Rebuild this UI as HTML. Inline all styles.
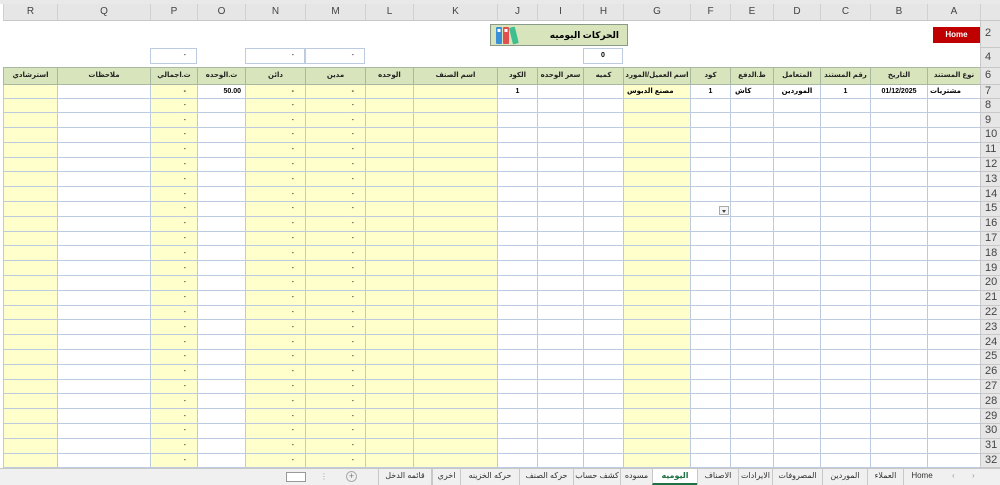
<!DOCTYPE html>
<html><head><meta charset="utf-8"><style>
*{box-sizing:border-box;margin:0;padding:0}
body{width:1000px;height:485px;overflow:hidden;background:#fff;font-family:"Liberation Sans","DejaVu Sans",sans-serif;position:relative}
.top{position:absolute;left:0;top:0;width:1000px;height:4px;background:#e9e9e9}
table{position:absolute;left:3px;top:4px;border-collapse:collapse;table-layout:fixed;direction:rtl;width:997px}
td,th{padding:0;overflow:hidden;white-space:nowrap;font-size:7px;line-height:1}
thead th{height:16px;background:#e6e6e6;color:#444;font-weight:normal;font-size:10px;border-left:1px solid #d0d0d0;border-bottom:1px solid #c8c8c8}
th.rh{background:#e6e6e6;color:#444;font-weight:normal;font-size:11px;text-align:left;padding-left:4px;border-bottom:1px solid #c8c8c8;border-left:1px solid #c8c8c8}
tbody td{border:1px solid #bccbe0}
tr.b td{border:none}
tr.r2{height:27px}tr.r4{height:20px}tr.r6{height:17px}tr.r7{height:14px}
tr.rr{height:14.8px}
tr.r6 td{background:#d8e4bc;font-weight:bold;text-align:center;color:#222;font-size:7px;border:1px solid #a9b8a0}
tr.r7 td{font-weight:bold}
.y{background:#ffffcc}
.d{text-align:right;padding-right:11px}
.c{text-align:center}
.box{position:absolute;height:16px;border:1px solid #bccbe0;background:#fff;font-size:7px;text-align:right;padding-right:10px;line-height:14px}
.home{position:absolute;left:933px;top:27px;width:47px;height:16px;background:#c00000;color:#fff;font-weight:bold;font-size:8px;text-align:center;line-height:16px}
.title{position:absolute;left:490px;top:24px;width:138px;height:22px;background:#d8e4bc;border:1px solid #8a9a88;font-weight:bold;font-size:9px;line-height:20px;text-align:right;padding-right:8px}
.tabs{position:absolute;left:0;top:468px;width:1000px;height:17px;background:#f0f0f0;border-top:1px solid #c8c8c8;font-size:8px;color:#333}
.tab{position:absolute;top:0;height:16px;line-height:14px;text-align:center;border-left:1px solid #c8c8c8}
.tab.a{background:#fff;color:#1e7145;font-weight:bold;border-bottom:2px solid #1e7145}
.dd{position:absolute;left:719px;top:206px;width:10px;height:9px;border:1px solid #aaa;background:#f4f4f4}
.dd:after{content:"";position:absolute;left:2px;top:3px;border-left:2.5px solid transparent;border-right:2.5px solid transparent;border-top:3px solid #444}
</style></head><body>
<div class="top"></div>
<table>
<colgroup><col style="width:20px"><col style="width:53px"><col style="width:57px"><col style="width:50px"><col style="width:47px"><col style="width:43px"><col style="width:40px"><col style="width:67px"><col style="width:40px"><col style="width:46px"><col style="width:40px"><col style="width:84px"><col style="width:48px"><col style="width:60px"><col style="width:60px"><col style="width:48px"><col style="width:47px"><col style="width:93px"><col style="width:54px"></colgroup>
<thead><tr><th></th><th>A</th><th>B</th><th>C</th><th>D</th><th>E</th><th>F</th><th>G</th><th>H</th><th>I</th><th>J</th><th>K</th><th>L</th><th>M</th><th>N</th><th>O</th><th>P</th><th>Q</th><th>R</th></tr></thead>
<tbody>
<tr class="b r2"><th class="rh">2</th><td></td><td></td><td></td><td></td><td></td><td></td><td></td><td></td><td></td><td></td><td></td><td></td><td></td><td></td><td></td><td></td><td></td><td></td></tr>
<tr class="b r4"><th class="rh">4</th><td></td><td></td><td></td><td></td><td></td><td></td><td></td><td></td><td></td><td></td><td></td><td></td><td></td><td></td><td></td><td></td><td></td><td></td></tr>
<tr class="r6"><th class="rh">6</th><td>نوع المستند</td><td>التاريخ</td><td>رقم المستند</td><td>المتعامل</td><td>ط.الدفع</td><td>كود</td><td>اسم العميل/المورد</td><td>كميه</td><td>سعر الوحده</td><td>الكود</td><td>اسم الصنف</td><td>الوحده</td><td>مدين</td><td>دائن</td><td>ث.الوحده</td><td>ث.اجمالي</td><td>ملاحظات</td><td>استرشادي</td></tr>
<tr class="r7"><th class="rh">7</th><td style="text-align:left;padding-left:2px">مشتريات</td><td class="c">01/12/2025</td><td class="c">1</td><td class="c">الموردين</td><td style="text-align:left;padding-left:4px">كاش</td><td class="c">1</td><td class="y" style="text-align:left;padding-left:3px">مصنع الدبوس</td><td></td><td></td><td class="c">1</td><td class="y"></td><td class="y"></td><td class="y d">-</td><td class="y d">-</td><td style="text-align:right;padding-right:4px">50.00</td><td class="y d">-</td><td></td><td class="y"></td></tr>
<tr class="rr"><th class="rh">8</th><td></td><td></td><td></td><td></td><td></td><td></td><td class="y"></td><td></td><td></td><td></td><td class="y"></td><td class="y"></td><td class="y d">-</td><td class="y d">-</td><td></td><td class="y d">-</td><td></td><td class="y"></td></tr>
<tr class="rr"><th class="rh">9</th><td></td><td></td><td></td><td></td><td></td><td></td><td class="y"></td><td></td><td></td><td></td><td class="y"></td><td class="y"></td><td class="y d">-</td><td class="y d">-</td><td></td><td class="y d">-</td><td></td><td class="y"></td></tr>
<tr class="rr"><th class="rh">10</th><td></td><td></td><td></td><td></td><td></td><td></td><td class="y"></td><td></td><td></td><td></td><td class="y"></td><td class="y"></td><td class="y d">-</td><td class="y d">-</td><td></td><td class="y d">-</td><td></td><td class="y"></td></tr>
<tr class="rr"><th class="rh">11</th><td></td><td></td><td></td><td></td><td></td><td></td><td class="y"></td><td></td><td></td><td></td><td class="y"></td><td class="y"></td><td class="y d">-</td><td class="y d">-</td><td></td><td class="y d">-</td><td></td><td class="y"></td></tr>
<tr class="rr"><th class="rh">12</th><td></td><td></td><td></td><td></td><td></td><td></td><td class="y"></td><td></td><td></td><td></td><td class="y"></td><td class="y"></td><td class="y d">-</td><td class="y d">-</td><td></td><td class="y d">-</td><td></td><td class="y"></td></tr>
<tr class="rr"><th class="rh">13</th><td></td><td></td><td></td><td></td><td></td><td></td><td class="y"></td><td></td><td></td><td></td><td class="y"></td><td class="y"></td><td class="y d">-</td><td class="y d">-</td><td></td><td class="y d">-</td><td></td><td class="y"></td></tr>
<tr class="rr"><th class="rh">14</th><td></td><td></td><td></td><td></td><td></td><td></td><td class="y"></td><td></td><td></td><td></td><td class="y"></td><td class="y"></td><td class="y d">-</td><td class="y d">-</td><td></td><td class="y d">-</td><td></td><td class="y"></td></tr>
<tr class="rr"><th class="rh">15</th><td></td><td></td><td></td><td></td><td></td><td></td><td class="y"></td><td></td><td></td><td></td><td class="y"></td><td class="y"></td><td class="y d">-</td><td class="y d">-</td><td></td><td class="y d">-</td><td></td><td class="y"></td></tr>
<tr class="rr"><th class="rh">16</th><td></td><td></td><td></td><td></td><td></td><td></td><td class="y"></td><td></td><td></td><td></td><td class="y"></td><td class="y"></td><td class="y d">-</td><td class="y d">-</td><td></td><td class="y d">-</td><td></td><td class="y"></td></tr>
<tr class="rr"><th class="rh">17</th><td></td><td></td><td></td><td></td><td></td><td></td><td class="y"></td><td></td><td></td><td></td><td class="y"></td><td class="y"></td><td class="y d">-</td><td class="y d">-</td><td></td><td class="y d">-</td><td></td><td class="y"></td></tr>
<tr class="rr"><th class="rh">18</th><td></td><td></td><td></td><td></td><td></td><td></td><td class="y"></td><td></td><td></td><td></td><td class="y"></td><td class="y"></td><td class="y d">-</td><td class="y d">-</td><td></td><td class="y d">-</td><td></td><td class="y"></td></tr>
<tr class="rr"><th class="rh">19</th><td></td><td></td><td></td><td></td><td></td><td></td><td class="y"></td><td></td><td></td><td></td><td class="y"></td><td class="y"></td><td class="y d">-</td><td class="y d">-</td><td></td><td class="y d">-</td><td></td><td class="y"></td></tr>
<tr class="rr"><th class="rh">20</th><td></td><td></td><td></td><td></td><td></td><td></td><td class="y"></td><td></td><td></td><td></td><td class="y"></td><td class="y"></td><td class="y d">-</td><td class="y d">-</td><td></td><td class="y d">-</td><td></td><td class="y"></td></tr>
<tr class="rr"><th class="rh">21</th><td></td><td></td><td></td><td></td><td></td><td></td><td class="y"></td><td></td><td></td><td></td><td class="y"></td><td class="y"></td><td class="y d">-</td><td class="y d">-</td><td></td><td class="y d">-</td><td></td><td class="y"></td></tr>
<tr class="rr"><th class="rh">22</th><td></td><td></td><td></td><td></td><td></td><td></td><td class="y"></td><td></td><td></td><td></td><td class="y"></td><td class="y"></td><td class="y d">-</td><td class="y d">-</td><td></td><td class="y d">-</td><td></td><td class="y"></td></tr>
<tr class="rr"><th class="rh">23</th><td></td><td></td><td></td><td></td><td></td><td></td><td class="y"></td><td></td><td></td><td></td><td class="y"></td><td class="y"></td><td class="y d">-</td><td class="y d">-</td><td></td><td class="y d">-</td><td></td><td class="y"></td></tr>
<tr class="rr"><th class="rh">24</th><td></td><td></td><td></td><td></td><td></td><td></td><td class="y"></td><td></td><td></td><td></td><td class="y"></td><td class="y"></td><td class="y d">-</td><td class="y d">-</td><td></td><td class="y d">-</td><td></td><td class="y"></td></tr>
<tr class="rr"><th class="rh">25</th><td></td><td></td><td></td><td></td><td></td><td></td><td class="y"></td><td></td><td></td><td></td><td class="y"></td><td class="y"></td><td class="y d">-</td><td class="y d">-</td><td></td><td class="y d">-</td><td></td><td class="y"></td></tr>
<tr class="rr"><th class="rh">26</th><td></td><td></td><td></td><td></td><td></td><td></td><td class="y"></td><td></td><td></td><td></td><td class="y"></td><td class="y"></td><td class="y d">-</td><td class="y d">-</td><td></td><td class="y d">-</td><td></td><td class="y"></td></tr>
<tr class="rr"><th class="rh">27</th><td></td><td></td><td></td><td></td><td></td><td></td><td class="y"></td><td></td><td></td><td></td><td class="y"></td><td class="y"></td><td class="y d">-</td><td class="y d">-</td><td></td><td class="y d">-</td><td></td><td class="y"></td></tr>
<tr class="rr"><th class="rh">28</th><td></td><td></td><td></td><td></td><td></td><td></td><td class="y"></td><td></td><td></td><td></td><td class="y"></td><td class="y"></td><td class="y d">-</td><td class="y d">-</td><td></td><td class="y d">-</td><td></td><td class="y"></td></tr>
<tr class="rr"><th class="rh">29</th><td></td><td></td><td></td><td></td><td></td><td></td><td class="y"></td><td></td><td></td><td></td><td class="y"></td><td class="y"></td><td class="y d">-</td><td class="y d">-</td><td></td><td class="y d">-</td><td></td><td class="y"></td></tr>
<tr class="rr"><th class="rh">30</th><td></td><td></td><td></td><td></td><td></td><td></td><td class="y"></td><td></td><td></td><td></td><td class="y"></td><td class="y"></td><td class="y d">-</td><td class="y d">-</td><td></td><td class="y d">-</td><td></td><td class="y"></td></tr>
<tr class="rr"><th class="rh">31</th><td></td><td></td><td></td><td></td><td></td><td></td><td class="y"></td><td></td><td></td><td></td><td class="y"></td><td class="y"></td><td class="y d">-</td><td class="y d">-</td><td></td><td class="y d">-</td><td></td><td class="y"></td></tr>
<tr class="rr"><th class="rh">32</th><td></td><td></td><td></td><td></td><td></td><td></td><td class="y"></td><td></td><td></td><td></td><td class="y"></td><td class="y"></td><td class="y d">-</td><td class="y d">-</td><td></td><td class="y d">-</td><td></td><td class="y"></td></tr>
</tbody></table>

<div class="home">Home</div>
<div class="title">الحركات اليوميه
<svg style="position:absolute;left:3px;top:1px" width="28" height="19" viewBox="0 0 28 19">
<rect x="2" y="1" width="6" height="17" rx="1" fill="#3b8fd6"/><rect x="3.5" y="3" width="3" height="3" fill="#fff"/>
<rect x="9" y="1" width="6" height="17" rx="1" fill="#e05050"/><rect x="10.5" y="3" width="3" height="3" fill="#fff"/>
<rect x="17" y="1" width="6" height="17" rx="1" fill="#3fbf8f" transform="rotate(-14 20 10)"/>
</svg></div>

<div class="box" style="left:150px;top:48px;width:47px">-</div>
<div class="box" style="left:245px;top:48px;width:60px">-</div>
<div class="box" style="left:305px;top:48px;width:60px">-</div>
<div class="box" style="left:583px;top:48px;width:40px;text-align:center;padding:0;font-weight:bold">0</div>
<div class="dd"></div>

<div class="tabs">
<div class="tab" style="left:903px;width:37px">Home</div>
<div class="tab" style="left:867px;width:36px">العملاء</div>
<div class="tab" style="left:822px;width:45px">الموردين</div>
<div class="tab" style="left:772px;width:50px">المصروفات</div>
<div class="tab" style="left:738px;width:34px">الايرادات</div>
<div class="tab" style="left:697px;width:41px">الاصناف</div>
<div class="tab a" style="left:652px;width:45px">اليوميه</div>
<div class="tab" style="left:620px;width:32px">مسوده</div>
<div class="tab" style="left:573px;width:47px">كشف حساب</div>
<div class="tab" style="left:519px;width:54px">حركه الصنف</div>
<div class="tab" style="left:460px;width:59px">حركه الخزينه</div>
<div class="tab" style="left:432px;width:28px">اخري</div>
<div class="tab" style="left:378px;width:54px;border-right:1px solid #c8c8c8">قائمه الدخل</div>
<div style="position:absolute;left:346px;top:2px;width:11px;height:11px;border:1px solid #aaa;border-radius:50%;font-size:9px;line-height:9px;text-align:center;color:#777">+</div>
<div style="position:absolute;left:320px;top:3px;color:#999;font-size:8px">⋮</div>
<div style="position:absolute;left:286px;top:3px;width:20px;height:10px;border:1px solid #999;background:#fff"></div>
<div style="position:absolute;left:952px;top:2px;color:#999;font-size:8px">‹</div>
<div style="position:absolute;left:972px;top:2px;color:#999;font-size:8px">›</div>
</div>
</body></html>
